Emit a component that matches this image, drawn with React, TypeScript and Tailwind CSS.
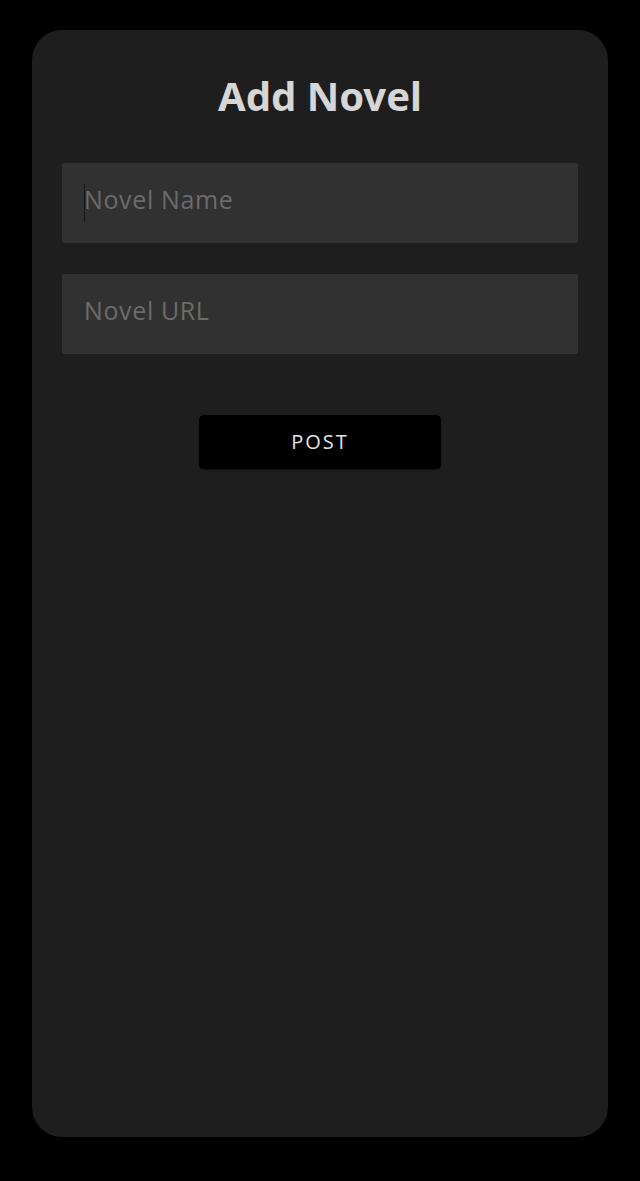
export default function App() {
    return (
        <div className="flex min-h-[1181px] w-full justify-center bg-black px-8 pt-[30px] pb-11">
            <div className="flex w-full flex-col items-center rounded-[30px] bg-[#1e1e1e] px-[30px] pt-[46px]" style={{ fontFamily: "'Open Sans', 'Noto Sans', sans-serif" }}>
                <h1 className="text-[40px] leading-none font-bold text-[#d6d6d6]" style={{ fontFamily: "'Noto Sans', 'Open Sans', sans-serif" }}>
                    Add Novel
                </h1>
                <div className="relative mt-[47px] w-full">
                    <input
                        placeholder="Novel Name"
                        className="h-20 w-full rounded-[2px] bg-[#313131] px-[22px] pb-2 text-[25px] tracking-[0.025em] text-[#cccccc] outline-none placeholder:text-[#6b6b6b]"
                    />
                    <span className="absolute top-[21px] left-[22px] h-[38px] w-px bg-[#161616]" />
                </div>
                <input
                    placeholder="Novel URL"
                    className="mt-[31px] h-20 w-full rounded-[2px] bg-[#313131] px-[22px] pb-2 text-[25px] tracking-[0.025em] text-[#cccccc] outline-none placeholder:text-[#6b6b6b]"
                />
                <button className="mt-[61px] h-[54px] w-[242px] rounded-[5px] bg-black text-[20px] tracking-[0.1em] text-[#e4e4e4] shadow-[0_1px_2px_rgba(0,0,0,0.5)]">
                    POST
                </button>
            </div>
        </div>
    );
}
